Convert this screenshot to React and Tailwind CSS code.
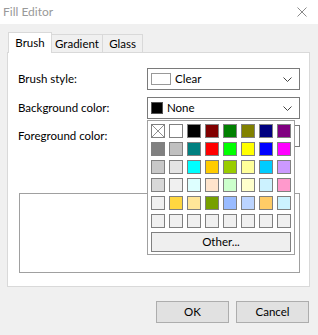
import React from "react"

const swatches = [
  ["x", "#ffffff", "#000000", "#800000", "#008000", "#808000", "#000080", "#800080"],
  ["#808080", "#c0c0c0", "#008080", "#ff0000", "#00ff00", "#ffff00", "#0000ff", "#ff00ff"],
  ["#c8c8c8", "#e4e4e4", "#00ffff", "#ffcc00", "#99cc00", "#ffff99", "#00ccff", "#cc99ff"],
  ["#d8d8d8", "#f0f0f0", "#ddffff", "#ffe4cc", "#ccffcc", "#ffffcc", "#ccf2ff", "#ff99cc"],
  ["#f0f0f0", "#ffd740", "#ffe699", "#77a000", "#99bbff", "#bbd4ff", "#ffcc66", "#ccf2ff"],
  ["#f0f0f0", "#f0f0f0", "#f0f0f0", "#f0f0f0", "#f0f0f0", "#f0f0f0", "#f0f0f0", "#f0f0f0"],
]

function Chevron() {
  return (
    <svg width="9" height="5" viewBox="0 0 9 5" className="ml-auto">
      <path d="M0.5 0.5 L4.5 4.5 L8.5 0.5" fill="none" stroke="#444" strokeWidth="1" />
    </svg>
  )
}

function Dropdown({ swatch, label }) {
  return (
    <div className="w-[153px] h-[22px] border border-[#7a7a7a] bg-white flex items-center pl-[3px] pr-[7px]">
      {swatch}
      <span className="ml-[4px] text-black">{label}</span>
      <Chevron />
    </div>
  )
}

function Swatch({ color }) {
  if (color === "x") {
    return (
      <div className="w-[14px] h-[14px] border border-[#808080] bg-white">
        <svg width="12" height="12" viewBox="0 0 12 12" className="block">
          <path d="M0 0 L12 12 M12 0 L0 12" stroke="#909090" strokeWidth="1" />
        </svg>
      </div>
    )
  }
  return <div className="w-[14px] h-[14px] border border-[#808080]" style={{ backgroundColor: color }} />
}

export default function App() {
  return (
    <div className="relative w-[318px] h-[335px] bg-[#f0f0f0] text-[11.5px] leading-none overflow-hidden" style={{ fontFamily: 'Lato, "Noto Sans", sans-serif' }}>
      {/* Title bar */}
      <div className="h-[24px] bg-white flex items-center pl-[3px] pr-[11px]">
        <span className="text-[#999999] text-[12px]">Fill Editor</span>
        <svg width="10" height="10" viewBox="0 0 10 10" className="ml-auto">
          <path d="M0.5 0.5 L9.5 9.5 M9.5 0.5 L0.5 9.5" stroke="#8a8a8a" strokeWidth="1" />
        </svg>
      </div>

      {/* Tabs */}
      <div className="flex items-end pl-[8px] mt-[8px] h-[21px] relative z-10">
        <div className="w-[44px] h-[21px] bg-white border border-b-0 border-[#d9d9d9] flex items-center justify-center pb-[1px]">Brush</div>
        <div className="w-[51px] h-[19px] border border-l-0 border-b-0 border-[#d9d9d9] flex items-center justify-center">Gradient</div>
        <div className="w-[40px] h-[19px] border border-l-0 border-b-0 border-[#d9d9d9] flex items-center justify-center">Glass</div>
      </div>

      {/* Panel */}
      <div className="ml-[7px] -mt-px w-[303px] h-[235px] bg-white border border-[#d9d9d9] pt-[15px] pl-[10px] pr-[9px] flex flex-col">
        <div className="flex items-center justify-between">
          <span>Brush style:</span>
          <Dropdown label="Clear" swatch={<div className="w-[20px] h-[12px] border border-[#999999] bg-white" />} />
        </div>
        <div className="flex items-center justify-between mt-[7px]">
          <span>Background color:</span>
          <Dropdown label="None" swatch={<div className="w-[12px] h-[12px] border border-[#555] bg-black" />} />
        </div>
        <div className="flex items-center justify-between mt-[6px]">
          <span>Foreground color:</span>
          <Dropdown label="" swatch={<div className="w-[12px] h-[12px] border border-[#555] bg-white" />} />
        </div>
        <div className="mt-[46px] ml-[1px] w-[281px] h-[80px] border border-[#a0a0a0]" />
      </div>

      {/* Buttons */}
      <div className="flex justify-end gap-[7px] pr-[9px] mt-[14px]">
        <button className="w-[73px] h-[22px] bg-[#e1e1e1] border border-[#adadad] text-black">OK</button>
        <button className="w-[73px] h-[22px] bg-[#e1e1e1] border border-[#adadad] text-black">Cancel</button>
      </div>

      {/* Color popup */}
      <div className="absolute left-[147px] top-[120px] w-[148px] h-[135px] bg-white border border-[#a0a0a0] p-[3px] z-20">
        <div className="grid grid-cols-8 gap-[4px]">
          {swatches.flat().map((c, i) => (
            <Swatch key={i} color={c} />
          ))}
        </div>
        <div className="mt-[4px] h-[20px] w-[140px] bg-[#efefef] border border-[#808080] flex items-center justify-center text-black">
          Other...
        </div>
      </div>
    </div>
  )
}
